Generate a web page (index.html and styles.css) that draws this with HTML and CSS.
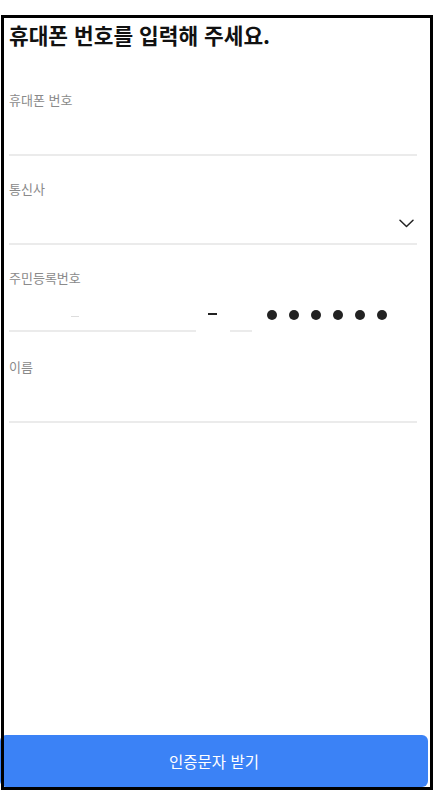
FILE: index.html
```html
<!DOCTYPE html>
<html lang="ko">
<head>
<meta charset="utf-8">
<title>휴대폰 번호 입력</title>
<link rel="stylesheet" href="styles.css">
</head>
<body>
<div class="frame">
  <div class="content">
    <h1 class="title">휴대폰 번호를 입력해 주세요.</h1>
    <div class="fields">
      <div class="field">
        <div class="label">휴대폰 번호</div>
        <div class="input lined"></div>
      </div>
      <div class="field">
        <div class="label">통신사</div>
        <div class="input lined select">
          <svg class="chevron" width="15" height="9" viewBox="0 0 15 9" aria-hidden="true">
            <path d="M1 1.2 L7.5 7.5 L14 1.2" fill="none" stroke="#222" stroke-width="1.5" stroke-linecap="round" stroke-linejoin="round"/>
          </svg>
        </div>
      </div>
      <div class="field">
        <div class="label">주민등록번호</div>
        <div class="input rrn">
          <div class="rrn-front"><span class="caret"></span></div>
          <span class="rrn-dash" aria-hidden="true"></span>
          <div class="rrn-back"></div>
          <div class="dots">
            <span class="dot"></span><span class="dot"></span><span class="dot"></span><span class="dot"></span><span class="dot"></span><span class="dot"></span>
          </div>
        </div>
      </div>
      <div class="field">
        <div class="label">이름</div>
        <div class="input lined"></div>
      </div>
    </div>
  </div>
  <button class="submit" type="button">인증문자 받기</button>
</div>
</body>
</html>
```

FILE: styles.css
```css
html, body {
  margin: 0;
  padding: 0;
  background: #ffffff;
}

body {
  font-family: "Noto Sans CJK KR", "Noto Sans", sans-serif;
  color: #111111;
}

.frame {
  position: relative;
  box-sizing: border-box;
  width: 432px;
  height: 775px;
  margin: 15px 0 0 1px;
  padding: 3px;
  background: #ffffff;
}

.frame::after {
  content: "";
  position: absolute;
  inset: 0;
  border: 3px solid #000000;
  pointer-events: none;
  z-index: 2;
}

.content {
  padding: 3px 13px 0 5px;
}

.title {
  margin: 0;
  font-size: 21.4px;
  line-height: 28px;
  font-weight: 700;
  color: #111111;
  letter-spacing: 0;
}

.fields {
  margin-top: 42px;
  display: flex;
  flex-direction: column;
  gap: 24px;
}

.label {
  font-size: 13px;
  line-height: 18px;
  color: #8a8a8a;
}

.input {
  height: 45px;
  box-sizing: content-box;
}

.lined {
  border-bottom: 2px solid #ebebeb;
}

.select {
  display: flex;
  align-items: center;
  justify-content: flex-end;
}

.chevron {
  margin: 5px 3px 0 0;
}

.rrn {
  display: flex;
  align-items: flex-end;
  padding-bottom: 2px;
}

.rrn-front {
  width: 187px;
  height: 47px;
  box-sizing: border-box;
  border-bottom: 2px solid #ebebeb;
  display: flex;
  align-items: flex-end;
  padding-left: 62px;
  padding-bottom: 13px;
}

.caret {
  width: 8px;
  height: 1px;
  background: #dddddd;
}

.rrn-dash {
  width: 9px;
  height: 2px;
  background: #222222;
  margin: 0 13px 17px 12px;
}

.rrn-back {
  width: 22px;
  height: 47px;
  box-sizing: border-box;
  border-bottom: 2px solid #ebebeb;
}

.dots {
  display: flex;
  gap: 12px;
  margin: 0 0 12px 15px;
}

.dot {
  width: 10px;
  height: 10px;
  border-radius: 50%;
  background: #222222;
}

.submit {
  position: absolute;
  left: -1px;
  right: 5px;
  bottom: 3px;
  height: 52px;
  border: none;
  border-radius: 6px;
  background: #3b82f6;
  color: #ffffff;
  font-family: "Noto Sans CJK KR", "Noto Sans", sans-serif;
  font-size: 15.5px;
  font-weight: 400;
  padding: 0;
  cursor: pointer;
}
```
